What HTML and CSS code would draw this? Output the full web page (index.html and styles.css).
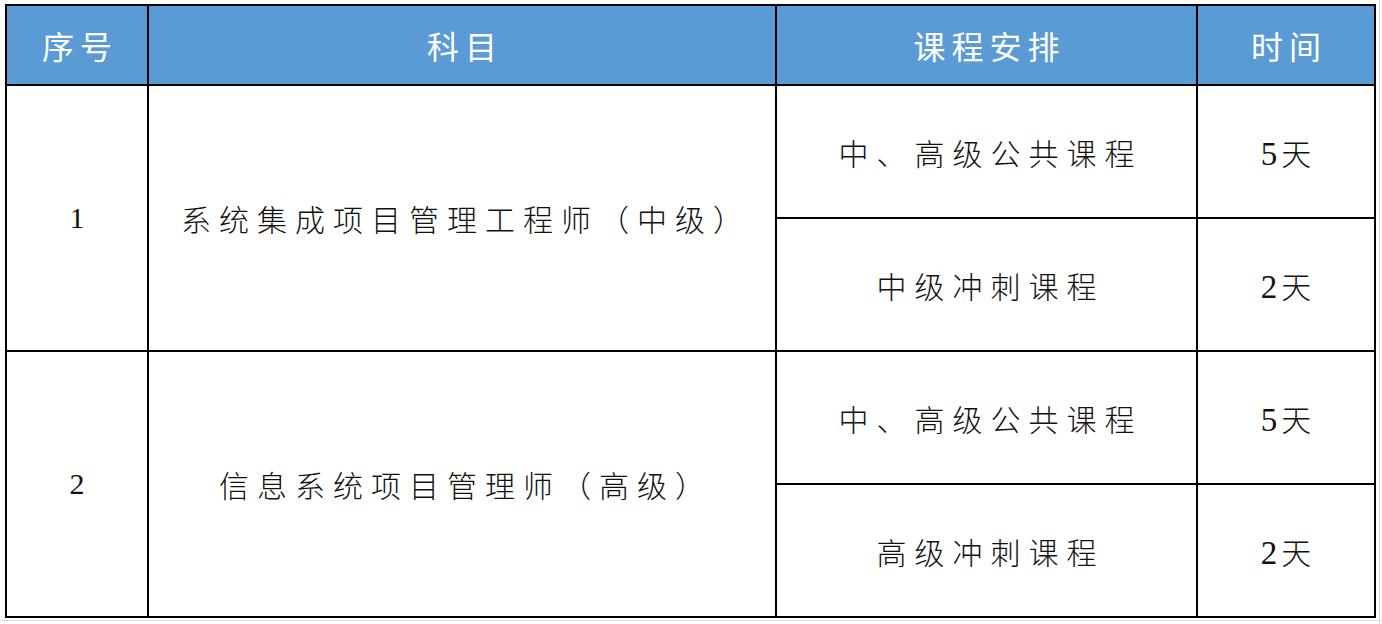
FILE: index.html
```html
<!DOCTYPE html>
<html lang="zh-CN">
<head>
<meta charset="utf-8">
<title>课程安排</title>
<link rel="stylesheet" href="styles.css">
</head>
<body>
<table class="schedule">
  <colgroup>
    <col class="c-no">
    <col class="c-subject">
    <col class="c-plan">
    <col class="c-time">
  </colgroup>
  <thead>
    <tr class="head-row">
      <th><span class="sp">序号</span></th>
      <th><span class="sp">科目</span></th>
      <th><span class="sp">课程安排</span></th>
      <th><span class="sp">时间</span></th>
    </tr>
  </thead>
  <tbody>
    <tr>
      <td rowspan="2" class="num">1</td>
      <td rowspan="2"><span class="sp">系统集成项目管理工程师（中级）</span></td>
      <td><span class="sp">中、高级公共课程</span></td>
      <td class="days"><span class="digit">5</span>天</td>
    </tr>
    <tr>
      <td><span class="sp">中级冲刺课程</span></td>
      <td class="days"><span class="digit">2</span>天</td>
    </tr>
    <tr>
      <td rowspan="2" class="num">2</td>
      <td rowspan="2"><span class="sp">信息系统项目管理师（高级）</span></td>
      <td><span class="sp">中、高级公共课程</span></td>
      <td class="days"><span class="digit">5</span>天</td>
    </tr>
    <tr>
      <td><span class="sp">高级冲刺课程</span></td>
      <td class="days"><span class="digit">2</span>天</td>
    </tr>
  </tbody>
</table>
</body>
</html>
```
FILE: styles.css
```css
html, body {
  margin: 0;
  padding: 0;
}
body {
  padding: 4px 0 0 5px;
  font-family: "Noto Sans CJK SC", "Noto Sans", sans-serif;
  color: #111;
  background-color: #ffffff;
  background-image:
    linear-gradient(#dcdcdc, #dcdcdc),
    linear-gradient(#dcdcdc, #dcdcdc);
  background-repeat: no-repeat;
  background-size: 1px 100%, 100% 1px;
  background-position: 1379px 0, 0 620px;
  min-height: 624px;
  box-sizing: border-box;
}
.schedule {
  border-collapse: collapse;
  table-layout: fixed;
  width: 1369px;
  background: #ffffff;
}
.c-no { width: 142px; }
.c-subject { width: 628px; }
.c-plan { width: 421px; }
.c-time { width: 178px; }

.schedule th,
.schedule td {
  border: 2px solid #000;
  text-align: center;
  vertical-align: middle;
  padding: 0;
}
.head-row th {
  height: 78px;
  background: #5b9bd5;
  color: #ffffff;
  font-weight: 400;
  font-size: 32px;
}
.schedule td {
  height: 131px;
  font-size: 30px;
  font-weight: 300;
}
.sp {
  letter-spacing: 8px;
  margin-right: -8px;
}
.head-row .sp {
  letter-spacing: 6px;
  margin-right: -6px;
}
.num {
  font-family: "Liberation Serif", serif;
  font-size: 33px;
}
.days {
  font-size: 30px;
}
.digit {
  font-family: "Liberation Serif", serif;
  font-size: 33px;
  margin-right: 4px;
}
```
